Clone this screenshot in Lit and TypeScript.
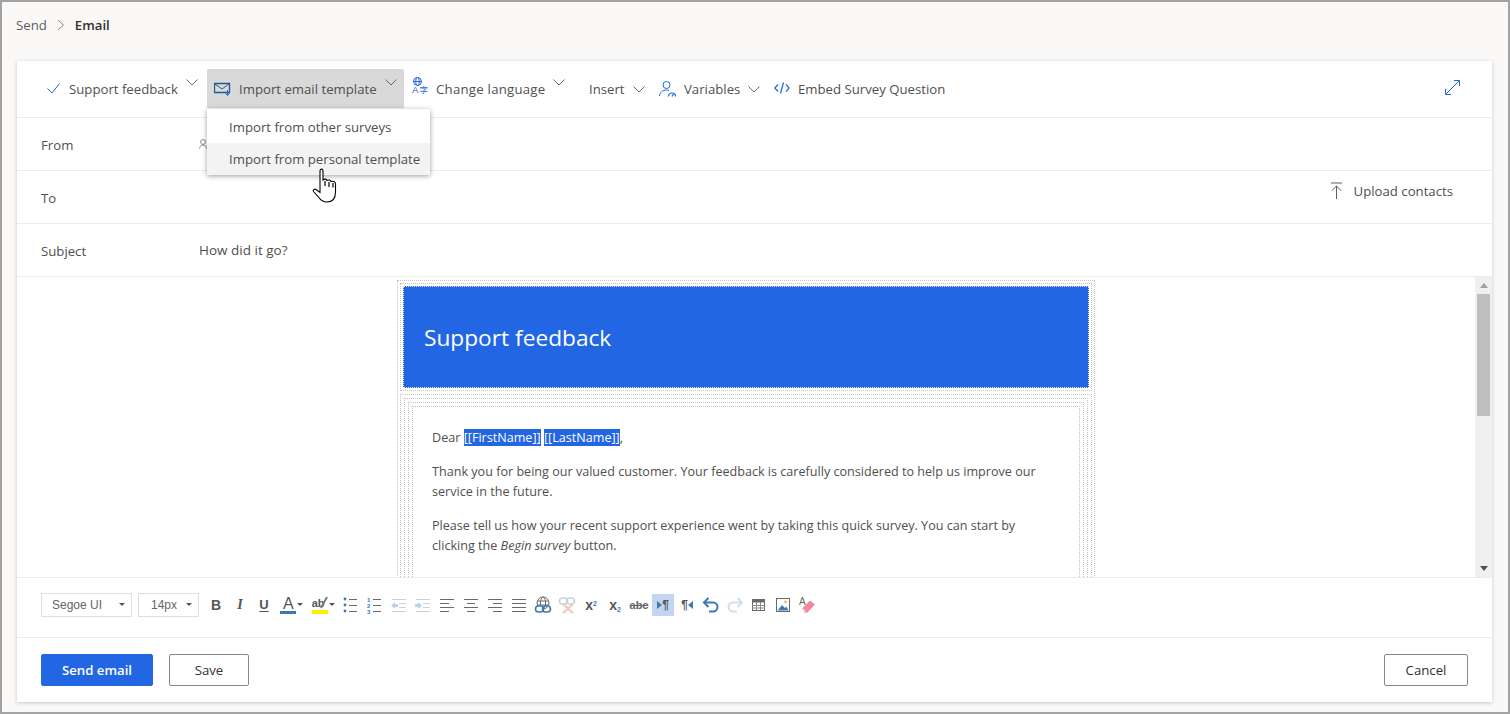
import { LitElement, css, html, svg } from 'lit';
import { customElement } from 'lit/decorators.js';

const chevron = html`<svg class="chev" width="12" height="7" viewBox="0 0 12 7"><path d="M.5.5L6 6l5.500-5.500" fill="none" stroke="#6b6a69" stroke-width="1"/></svg>`;

// icons for the rich text bar, all on a 18x18 box
const lines = (rows: number[][], color = '#6a6a6a') =>
  rows.map(([x1, y, x2]) => svg`<path d="M${x1} ${y}H${x2}" stroke=${color} stroke-width="1"/>`);

const ic = (body: unknown) => html`<svg width="18" height="18" viewBox="0 0 18 18" fill="none">${body}</svg>`;

const icons = {
  bullets: ic(svg`${lines([[7, 3.5, 15], [7, 9.5, 15], [7, 15.5, 15]])}
    <circle cx="3" cy="3" r="1.4" fill="#3f78b0"/><circle cx="3" cy="9" r="1.4" fill="#3f78b0"/><circle cx="3" cy="15" r="1.4" fill="#3f78b0"/>`),
  numbers: ic(svg`${lines([[7, 3.5, 15], [7, 9.5, 15], [7, 15.5, 15]])}
    <text x="1" y="6" class="tiny">1</text><text x="1" y="12" class="tiny">2</text><text x="1" y="18" class="tiny">3</text>`),
  outdent: ic(svg`${lines([[2, 3.5, 16], [9, 7.5, 16], [9, 11.5, 16], [2, 15.5, 16]], '#cfcfcf')}
    <path d="M1 9.5l4-3.500v2h3v3H5v2z" fill="#bcd2e8"/>`),
  indent: ic(svg`${lines([[2, 3.5, 16], [9, 7.5, 16], [9, 11.5, 16], [2, 15.5, 16]], '#cfcfcf')}
    <path d="M8 9.5L4 6v2H1v3h3v2z" fill="#bcd2e8"/>`),
  left: ic(lines([[2, 3.5, 16], [2, 7.5, 11], [2, 11.5, 16], [2, 15.5, 11]])),
  center: ic(lines([[2, 3.5, 16], [5, 7.5, 13], [2, 11.5, 16], [5, 15.5, 13]])),
  right: ic(lines([[2, 3.5, 16], [7, 7.5, 16], [2, 11.5, 16], [7, 15.5, 16]])),
  justify: ic(lines([[2, 3.5, 16], [2, 7.5, 16], [2, 11.5, 16], [2, 15.5, 16]])),
  link: ic(svg`<circle cx="9" cy="7" r="6" stroke="#6a6a6a"/><ellipse cx="9" cy="7" rx="2.600" ry="6" stroke="#6a6a6a"/><path d="M3 5h12M3 9h12" stroke="#6a6a6a"/>
    <rect x="1.500" y="10" width="8" height="6" rx="3" stroke="#3f78b0" stroke-width="1.600" fill="#fff"/><rect x="8.500" y="10" width="8" height="6" rx="3" stroke="#3f78b0" stroke-width="1.600"/>`),
  unlink: ic(svg`<rect x="1.500" y="2" width="8" height="6" rx="3" stroke="#c9d3dc" stroke-width="1.600"/><rect x="8.500" y="2" width="8" height="6" rx="3" stroke="#c9d3dc" stroke-width="1.600"/>
    <path d="M5 8l10 9M15 8L5 17" stroke="#f3c4b8" stroke-width="1.800"/>`),
  undo: ic(svg`<path d="M6.500 2L2 6.500 6.500 11" stroke="#3f78b0" stroke-width="2"/><path d="M2.500 6.500H11a4.500 4.500 0 010 9H7" stroke="#3f78b0" stroke-width="2"/>`),
  redo: ic(svg`<path d="M11.500 2L16 6.500 11.500 11" stroke="#cfdeed" stroke-width="2"/><path d="M15.500 6.500H7a4.500 4.500 0 000 9h4" stroke="#cfdeed" stroke-width="2"/>`),
  table: ic(svg`<rect x="2.500" y="3.500" width="12" height="11" stroke="#6a6a6a"/><path d="M2.500 3.500h12v3h-12z" fill="#6a6a6a"/><path d="M2 9.500h13M2 12h13M6.500 6v8M10.500 6v8" stroke="#8a8a8a"/>`),
  image: ic(svg`<rect x="2.500" y="2.500" width="13" height="13" stroke="#6a6a6a"/><circle cx="11.500" cy="6" r="1.400" fill="#eeb27a"/><path d="M3.500 14.500l4.500-5.500 3 3 1.500-1.500 2 4z" fill="#3f78b0"/>`),
  eraser: ic(svg`<text x="1" y="9" class="eraser-a">A</text><path d="M4 12.500l8-8 5 4-8 8.500H7z" fill="#f08a9c"/><path d="M4.500 12.500l3.500 4" stroke="#fff"/>`),
};

@customElement('app-root')
export class AppRoot extends LitElement {
  static styles = css`
    :host {
      display: block;
      width: 1510px;
      height: 714px;
      box-sizing: border-box;
      position: relative;
      overflow: hidden;
      border: 2px solid #a3a3a3;
      background: #faf9f8;
      color: #323130;
      font-family: 'Open Sans', 'Noto Sans', sans-serif;
      font-size: 13.2px;
    }

    .crumbs {
      height: 46px;
      margin-bottom: 13px;
      padding-left: 14px;
      display: flex;
      align-items: center;
      gap: 10px;
      color: #605e5c;
    }
    .crumbs b {
      color: #323130;
      font-weight: 600;
    }

    .card {
      margin: 0 16px 0 15px;
      height: 641px;
      background: #fff;
      box-shadow: 0 1px 4px rgba(0, 0, 0, 0.2);
      display: flex;
      flex-direction: column;
    }

    .toolbar {
      height: 56px;
      flex: none;
      border-bottom: 1px solid #edebe9;
      padding: 0 32px 0 29px;
      display: flex;
      align-items: center;
      color: #514f4d;
    }
    .tool {
      display: flex;
      align-items: center;
      gap: 8px;
      height: 39px;
      margin-top: -1px;
      white-space: nowrap;
      position: relative;
    }
    .tool .chev {
      margin-top: -12px;
    }
    .tool.flat .chev {
      margin-top: 1px;
    }
    .tool-feedback {
      width: 161px;
    }
    .tool-feedback svg:first-child {
      margin-top: -2px;
    }
    .tool-import {
      width: 197px;
      padding-left: 7px;
      box-sizing: border-box;
      background: #d9d9d9;
      border-radius: 2px 2px 0 0;
    }
    .tool-lang {
      margin-left: 8px;
      width: 177px;
    }
    .tool-lang svg:first-child {
      margin-top: -3px;
    }
    .tool-lang span {
      letter-spacing: 0.25px;
    }
    .tool-insert {
      width: 70px;
    }
    .tool-vars {
      width: 115px;
    }
    .tool-embed svg {
      margin-top: -2px;
    }
    .expand {
      margin-top: -4px;
    }
    .spacer {
      flex: 1;
    }

    .menu {
      position: absolute;
      left: 0;
      top: 40px;
      width: 223px;
      padding-top: 2px;
      background: #fff;
      box-shadow: 0 1px 5px rgba(0, 0, 0, 0.38);
      z-index: 3;
    }
    .menu div {
      height: 32px;
      padding-left: 22px;
      display: flex;
      align-items: center;
      color: #514f4d;
    }
    .menu .hover {
      background: #f3f3f3;
    }

    .row {
      height: 52px;
      flex: none;
      border-bottom: 1px solid #edebe9;
      display: flex;
      align-items: center;
      padding: 0 39px 0 24px;
    }
    .row label {
      width: 158px;
      padding-top: 2px;
      color: #514f4d;
    }
    .row .value {
      flex: 1;
      color: #514f4d;
      font-size: 13.5px;
    }
    .upload {
      display: flex;
      align-items: center;
      gap: 11px;
      color: #514f4d;
      margin-bottom: 13px;
    }

    .editor {
      height: 300px;
      flex: none;
      display: flex;
      border-bottom: 1px solid #edebe9;
    }
    .canvas {
      flex: 1;
      overflow: hidden;
      padding-top: 3px;
      display: flex;
      justify-content: center;
      align-items: flex-start;
    }
    .frame {
      border: 1px dotted #c4c4c4;
      padding: 2px;
    }
    .frame.wide {
      padding: 3px;
    }
    .mail {
      width: 698px;
      box-sizing: border-box;
      flex: none;
    }
    .mail > .frame + .frame {
      margin-top: 3px;
    }
    .banner {
      height: 99px;
      padding: 1px 0 0 20px;
      background: #2266e3;
      border: 1px dotted #e8e8e8;
      display: flex;
      align-items: center;
      color: #fff;
      font-size: 22.7px;
    }
    .body {
      border: 1px dotted #c4c4c4;
      padding: 21px 35px 40px 19px;
      font-size: 12.6px;
      line-height: 20px;
      color: #514f4d;
    }
    .body p {
      margin: 0 0 14px;
    }
    .tag {
      background: #2266e3;
      color: #fff;
    }

    .scrollbar {
      width: 17px;
      flex: none;
      background: #f0f0f0;
      display: flex;
      flex-direction: column;
      align-items: center;
    }
    .scrollbar .btn {
      height: 17px;
      display: flex;
      align-items: center;
      justify-content: center;
    }
    .scrollbar .thumb {
      width: 13px;
      height: 122px;
      background: #bfbfbf;
    }

    .format {
      height: 60px;
      box-sizing: border-box;
      flex: none;
      border-bottom: 1px solid #edebe9;
      padding: 0 0 6px 24px;
      display: flex;
      align-items: center;
      color: #555;
    }
    .select {
      height: 24px;
      box-sizing: border-box;
      border: 1px solid #dedede;
      display: flex;
      align-items: center;
      justify-content: space-between;
      padding: 0 6px 0 10px;
      font-family: 'Liberation Sans', Arial, sans-serif;
      font-size: 12px;
      color: #666;
      margin-right: 6px;
    }
    .select-font {
      width: 91px;
    }
    .select-size {
      width: 61px;
      padding-left: 12px;
      margin-right: 5px;
    }
    .caret {
      width: 0;
      height: 0;
      border: 3px solid transparent;
      border-top: 3px solid #555;
      margin-top: 3px;
    }
    .fbtn {
      width: 24px;
      height: 22px;
      flex: none;
      display: flex;
      align-items: center;
      justify-content: center;
      font-family: 'Liberation Sans', Arial, sans-serif;
      font-size: 13px;
    }
    .fbtn.with-caret {
      width: 31.5px;
      gap: 1px;
    }
    .fbtn.active {
      width: 22px;
      margin: 0 1px;
      background: #c3d5f1;
    }
    .bold {
      font-weight: 700;
      font-size: 14px;
    }
    .ital {
      font-style: italic;
      font-family: 'Liberation Serif', serif;
      font-weight: 700;
      font-size: 14px;
    }
    .under {
      text-decoration: underline;
      text-underline-offset: 2px;
      font-weight: 700;
    }
    .strike {
      text-decoration: line-through;
      font-size: 11px;
      font-weight: 700;
      color: #666;
    }
    .para {
      font-size: 12px;
      font-weight: 700;
      color: #555;
      display: flex;
      align-items: center;
    }
    .para i {
      display: block;
      width: 0;
      height: 0;
      border: 4px solid transparent;
    }
    .para .to-right {
      border-left: 5px solid #3f78b0;
      border-right: 0;
    }
    .para .to-left {
      border-right: 5px solid #3f78b0;
      border-left: 0;
    }
    .script {
      font-weight: 700;
      font-size: 14px;
      color: #555;
      display: flex;
    }
    .script small {
      font-size: 7px;
      color: #3f78b0;
    }
    .script .up {
      margin-top: -3px;
    }
    .script .down {
      margin-top: 9px;
    }
    .letter-a {
      width: 16px;
      text-align: center;
      font-size: 16px;
      line-height: 15px;
      border-bottom: 3px solid #3f78b0;
      color: #555;
    }
    .letter-ab {
      width: 16px;
      position: relative;
      font-size: 11px;
      font-weight: 700;
      line-height: 14px;
      border-bottom: 4px solid #ffee00;
      color: #555;
    }
    .pencil {
      position: absolute;
      right: 0;
      top: 0;
    }

    .tiny {
      font: 700 6px 'Liberation Sans', sans-serif;
      fill: #3f78b0;
    }
    .eraser-a {
      font: 10px 'Liberation Sans', sans-serif;
      fill: #666;
    }

    .actions {
      flex: 1;
      display: flex;
      align-items: center;
      padding: 0 24px;
      gap: 16px;
    }
    button {
      font: inherit;
      height: 32px;
      box-sizing: border-box;
      border-radius: 2px;
      border: 1px solid #8a8886;
      background: #fff;
      color: #323130;
      font-weight: 500;
      padding: 0;
    }
    .primary {
      width: 112px;
      background: #2266e3;
      border-color: #2266e3;
      color: #fff;
      font-weight: 600;
    }
    .save {
      width: 80px;
    }
    .cancel {
      width: 84px;
    }

    .cursor {
      position: absolute;
      left: 309px;
      top: 165px;
      z-index: 4;
    }
  `;

  render() {
    return html`
      <div class="crumbs">
        <span>Send</span>
        <svg width="8" height="12" viewBox="0 0 8 12"><path d="M1 1l5.500 5L1 11" fill="none" stroke="#8a8886"/></svg>
        <b>Email</b>
      </div>

      <div class="card">
        <div class="toolbar">
          <div class="tool tool-feedback">
            <svg width="15" height="12" viewBox="0 0 15 12"><path d="M1.500 6.500l4.500 4.500L13.500 1.500" fill="none" stroke="#2266e3"/></svg>
            <span>Support feedback</span>${chevron}
          </div>
          <div class="tool tool-import">
            <svg width="17" height="16" viewBox="0 0 17 16" fill="none">
              <path d="M.5 2.500h15v9H.5z" stroke="#1f5a8f" stroke-width="1.300"/>
              <path d="M1 3l7 5 7-5" stroke="#1f5a8f"/>
              <path d="M13.500 9v5M11.500 12.500l2 2 2-2" stroke="#2266e3"/>
            </svg>
            <span>Import email template</span>${chevron}
            <div class="menu">
              <div>Import from other surveys</div>
              <div class="hover">Import from personal template</div>
            </div>
          </div>
          <div class="tool tool-lang">
            <svg width="16" height="20" viewBox="0 0 16 20" fill="none">
              <circle cx="5.500" cy="4.500" r="4" stroke="#2266e3"/>
              <ellipse cx="5.500" cy="4.500" rx="1.800" ry="4" stroke="#2266e3"/>
              <path d="M1.500 4.500h8" stroke="#2266e3"/>
              <text x="0" y="16" font-size="9.500" fill="#2266e3" font-family="Liberation Sans">A</text>
              <text x="7.500" y="16" font-size="8.500" fill="#2266e3" font-family="Noto Sans CJK SC">字</text>
            </svg>
            <span>Change language</span>${chevron}
          </div>
          <div class="tool tool-insert flat"><span>Insert</span>${chevron}</div>
          <div class="tool tool-vars flat">
            <svg width="17" height="16" viewBox="0 0 17 16" fill="none">
              <circle cx="7.500" cy="4" r="3.500" stroke="#2266e3"/>
              <path d="M.5 15c.4-3.600 2.900-6 7-6 1 0 1.800.1 2.500.5" stroke="#2266e3"/>
              <path d="M9.500 15.500a3.500 3.500 0 017 0" stroke="#2266e3" stroke-width="1.200"/>
              <path d="M13 15.500l1.500-2.500" stroke="#2266e3" stroke-width="1.200"/>
            </svg>
            <span>Variables</span>${chevron}
          </div>
          <div class="tool tool-embed">
            <svg width="16" height="14" viewBox="0 0 16 14" fill="none">
              <path d="M4 3.500L.8 7 4 10.500M12 3.500L15.200 7 12 10.500M9.500 1.500l-3 11" stroke="#2266e3" stroke-width="1.200"/>
            </svg>
            <span>Embed Survey Question</span>
          </div>
          <div class="spacer"></div>
          <svg class="expand" width="15" height="15" viewBox="0 0 15 15" fill="none">
            <path d="M.8 14.200L14.200.8M9 .5h5.500V6M.5 9v5.500H6" stroke="#2266e3"/>
          </svg>
        </div>

        <div class="row">
          <label>From</label>
          <div class="value">
            <svg width="8" height="10" viewBox="0 0 8 10" fill="none"><circle cx="4" cy="3" r="2.400" stroke="#8a8886"/><path d="M.5 9.500C1 7 2.300 6 4 6s3 1 3.500 3.500" stroke="#8a8886"/></svg>
          </div>
        </div>
        <div class="row">
          <label>To</label>
          <div class="value"></div>
          <div class="upload">
            <svg width="13" height="17" viewBox="0 0 13 17" fill="none"><path d="M1 1h11M6.500 4v13M1.800 8.700l4.700-4.700 4.700 4.700" stroke="#605e5c"/></svg>
            <span>Upload contacts</span>
          </div>
        </div>
        <div class="row">
          <label>Subject</label>
          <div class="value">How did it go?</div>
        </div>

        <div class="editor">
          <div class="canvas">
            <div class="frame mail">
              <div class="frame">
                <div class="banner">Support feedback</div>
              </div>
              <div class="frame wide">
                <div class="frame wide">
                  <div class="frame wide">
                    <div class="body">
                      <p>Dear <span class="tag">[[FirstName]]</span> <span class="tag">[[LastName]]</span>,</p>
                      <p>Thank you for being our valued customer. Your feedback is carefully considered to help us improve our service in the future.</p>
                      <p>Please tell us how your recent support experience went by taking this quick survey. You can start by clicking the <em>Begin survey</em> button.</p>
                      <p>&nbsp;</p>
                    </div>
                  </div>
                </div>
              </div>
            </div>
          </div>
          <div class="scrollbar">
            <div class="btn"><svg width="8" height="5" viewBox="0 0 8 5"><path d="M4 0l4 5H0z" fill="#a0a0a0"/></svg></div>
            <div class="thumb"></div>
            <div class="spacer"></div>
            <div class="btn"><svg width="8" height="5" viewBox="0 0 8 5"><path d="M0 0h8L4 5z" fill="#505050"/></svg></div>
          </div>
        </div>

        <div class="format">
          <div class="select select-font">Segoe UI<span class="caret"></span></div>
          <div class="select select-size">14px<span class="caret"></span></div>
          <div class="fbtn bold">B</div>
          <div class="fbtn ital">I</div>
          <div class="fbtn under">U</div>
          <div class="fbtn with-caret"><span class="letter-a">A</span><span class="caret"></span></div>
          <div class="fbtn with-caret"><span class="letter-ab">ab<svg class="pencil" width="9" height="14" viewBox="0 0 9 14"><path d="M8 1L2 12" stroke="#777" stroke-width="1.800"/></svg></span><span class="caret"></span></div>
          <div class="fbtn">${icons.bullets}</div>
          <div class="fbtn">${icons.numbers}</div>
          <div class="fbtn">${icons.outdent}</div>
          <div class="fbtn">${icons.indent}</div>
          <div class="fbtn">${icons.left}</div>
          <div class="fbtn">${icons.center}</div>
          <div class="fbtn">${icons.right}</div>
          <div class="fbtn">${icons.justify}</div>
          <div class="fbtn">${icons.link}</div>
          <div class="fbtn">${icons.unlink}</div>
          <div class="fbtn script">x<small class="up">2</small></div>
          <div class="fbtn script">x<small class="down">2</small></div>
          <div class="fbtn strike">abc</div>
          <div class="fbtn active para"><i class="to-right"></i>¶</div>
          <div class="fbtn para">¶<i class="to-left"></i></div>
          <div class="fbtn">${icons.undo}</div>
          <div class="fbtn">${icons.redo}</div>
          <div class="fbtn">${icons.table}</div>
          <div class="fbtn">${icons.image}</div>
          <div class="fbtn">${icons.eraser}</div>
        </div>

        <div class="actions">
          <button class="primary">Send email</button>
          <button class="save">Save</button>
          <div class="spacer"></div>
          <button class="cancel">Cancel</button>
        </div>
      </div>

      <svg class="cursor" width="28" height="36" viewBox="0 0 28 36">
        <path d="M9 4C9 1.500 12 1.500 12 4V13C14 11.500 15.500 12 16 13.500C18 12.500 19.500 13 20 14.500C22 13.800 24.500 14.500 24.500 17V25C24.500 31 21.500 35 16 35C11.500 35 9.500 33 7.500 30L2.500 24.500C1.500 23 3.500 21.500 5 22.500L9 25.500Z" fill="#fff" stroke="#000" stroke-width="1.100"/>
        <path d="M14 14v5M18 15v5M22 16v4.500" stroke="#000" stroke-width="1.200"/>
      </svg>
    `;
  }
}
